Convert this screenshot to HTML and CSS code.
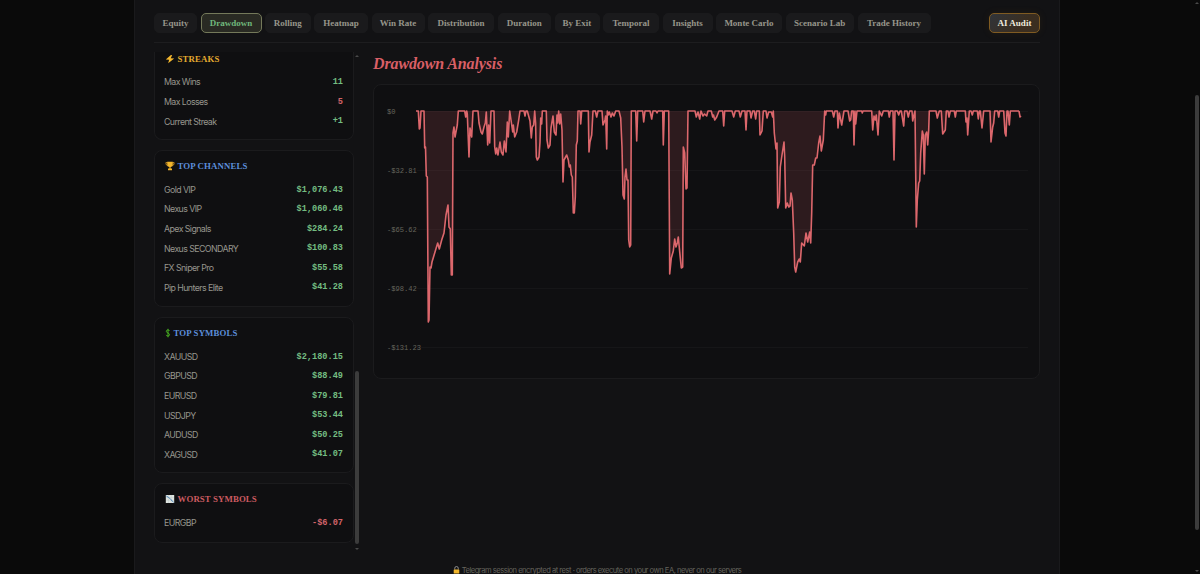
FILE: index.html
```html
<!DOCTYPE html>
<html lang="en">
<head>
<meta charset="utf-8">
<title>Drawdown Analysis</title>
<link rel="stylesheet" href="styles.css">
</head>
<body>
<main class="panel">
  <nav class="tabs">
    <button class="tab w-equity">Equity</button>
    <button class="tab w-drawdown active">Drawdown</button>
    <button class="tab w-rolling">Rolling</button>
    <button class="tab w-heatmap">Heatmap</button>
    <button class="tab w-winrate">Win Rate</button>
    <button class="tab w-distribution">Distribution</button>
    <button class="tab w-duration">Duration</button>
    <button class="tab w-exit">By Exit</button>
    <button class="tab w-temporal">Temporal</button>
    <button class="tab w-insights">Insights</button>
    <button class="tab w-monte">Monte Carlo</button>
    <button class="tab w-scenario">Scenario Lab</button>
    <button class="tab w-history">Trade History</button>
    <button class="tab audit">AI Audit</button>
  </nav>
  <div class="content">
    <aside class="sidebar">
      <section class="card first">
        <h3 class="gold"><svg class="icon" viewBox="0 0 10 10"><path d="M5.9.9.8 5.400l3.300.3L3.200 9.200l6-4.800-3.500-.2L7.200 1.200z" fill="#f5b82e"/></svg>STREAKS</h3>
        <div class="row"><span>Max Wins</span><b>11</b></div>
        <div class="row"><span>Max Losses</span><b class="neg">5</b></div>
        <div class="row"><span>Current Streak</span><b>+1</b></div>
      </section>
      <section class="card">
        <h3 class="blue"><svg class="icon" viewBox="0 0 10 10"><path d="M2.5 1.6H.9c0 2 .7 3 2.2 3.2M7.5 1.6h1.600c0 2-.7 3-2.200 3.200" fill="none" stroke="#d99a20" stroke-width=".9"/><path d="M2.2.7h5.600v2.500C7.800 4.800 6.800 5.800 5.600 6v1.500h1.400v1.700H3V7.500h1.400V6C3.200 5.800 2.200 4.800 2.200 3.200z" fill="#f2b52c"/></svg>TOP CHANNELS</h3>
        <div class="row"><span>Gold VIP</span><b>$1,076.43</b></div>
        <div class="row"><span>Nexus VIP</span><b>$1,060.46</b></div>
        <div class="row"><span>Apex Signals</span><b>$284.24</b></div>
        <div class="row"><span>Nexus SECONDARY</span><b>$100.83</b></div>
        <div class="row"><span>FX Sniper Pro</span><b>$55.58</b></div>
        <div class="row"><span>Pip Hunters Elite</span><b>$41.28</b></div>
      </section>
      <section class="card">
        <h3 class="blue"><svg class="icon dollar" viewBox="0 0 6 10"><path d="M4.500 3C4.300 1.500 1.300 1.500 1.300 3.300c0 1.900 3.300 1.500 3.300 3.500C4.600 8.400 1.400 8.500 1.200 6.900M3 .8v8.500" fill="none" stroke="#4bb822" stroke-width=".9"/></svg>TOP SYMBOLS</h3>
        <div class="row"><span>XAUUSD</span><b>$2,180.15</b></div>
        <div class="row"><span>GBPUSD</span><b>$88.49</b></div>
        <div class="row"><span>EURUSD</span><b>$79.81</b></div>
        <div class="row"><span>USDJPY</span><b>$53.44</b></div>
        <div class="row"><span>AUDUSD</span><b>$50.25</b></div>
        <div class="row"><span>XAGUSD</span><b>$41.07</b></div>
      </section>
      <section class="card">
        <h3 class="red"><svg class="icon" viewBox="0 0 10 10"><path d="M.8 1h8.400v8H.8z" fill="#dfe5e1"/><path d="M1 3.600h8M1 6.300h8M3.500 1v8M6.300 1v8" stroke="#b9c6c4" stroke-width=".4"/><path d="m1.300 2 2 1.300 1.500 1L6 5.800l2.700 2.500" fill="none" stroke="#3c78b4" stroke-width=".9"/></svg>WORST SYMBOLS</h3>
        <div class="row"><span>EURGBP</span><b class="neg">-$6.07</b></div>
      </section>
    </aside>
    <div class="side-scroll"><i class="arrow up"></i><i class="thumb"></i><i class="arrow down"></i></div>
    <section class="analysis">
      <h2>Drawdown Analysis</h2>
      <div class="chart-card">
        <svg class="chart" viewBox="374 85 665 293">
          <path class="grid" d="M417 111.500H1028M417 170.500H1028M417 229.500H1028M417 288.500H1028M417 347.500H1028"/>
          <g class="axis">
            <text x="387" y="114">$0</text>
            <text x="387" y="173">-$32.81</text>
            <text x="387" y="231.500">-$65.62</text>
            <text x="387" y="290.500">-$98.42</text>
            <text x="387" y="349.500">-$131.23</text>
          </g>
          <path class="series" d="M416 111H418.300L419.300 129 420 128 421 111H424L424.700 148 425.500 147 426.300 176 427.300 177 428.300 322 429 320 430 267 431 268 432 262 435 252 437.700 243 439.300 249 441.700 240 444 233 446 215 448 205 449 227 450.300 229 451.300 275H452.300L453 133 454 127 455 137 457.300 125 458.300 111H464.700L465.700 117 466.700 111 467.300 114 469 157 470 128 471.700 137 473 111H478L479 123 481 132 482.300 134 484 127 485.300 123 486.300 112 487.700 145 488.700 125 489.700 143 491 111H494L494.700 147 495.700 154 496.700 148 498 155 500 142 501.300 152 503 155 504.300 141 506 152 507.300 122 508.300 137 509.700 111 511.300 122 512.700 132 513.300 125 514.700 137 516.700 132 518.700 120 520 111H524L525 116 526 111H527.300L530 121 531.300 138 532.300 127 533.700 125 534.700 111 535.600 123 536.300 157 537.300 160 539 157 540 142 540.700 118 541.700 124 542.300 111H546.300L547 140 548.300 148 550 145 551 128 553 116 554.300 132 556 135 557 115 557.700 123 558.700 111 559.700 124 560.700 114 562 130 563 182 564 160 566.700 155 568.300 160 569.300 167 570.300 165 571.300 175 572.300 177 573.300 213H574.300L575.300 197 576.300 145 577.300 141 578 111H580L580.700 124 581.700 111H588.300L589 152 590 142 591.700 135 593 111H595.300L596.700 117 598 111H602L603 125 605 120 605.700 116 606.700 149 607.300 111 608.300 115 609.300 112 611 117 612.300 113 614 116 615.700 111H619L620.700 118 622 147 623 195 624.300 199 625 177 626 169 627 180H628L628.700 240 629.700 247 630.700 245 631.300 111H635.700L636.700 141 637.700 111H642.700L643.700 122 645 111H650L651.700 119 653 111H656L657 113 658 111H662.700L663.300 145 664.300 111H668.700L669.700 274 671.300 258 673.300 251 674.700 239 676 247 677.300 243 678.300 237 679.700 252 681.300 268 682.700 267 683.300 147 684.700 153 686 189 687 188 688 111H695L696.300 117 698 112 699.700 119 701 111 703 116 704.500 114 706.700 116 708 111H711.300L712.700 117 713.500 115 714.700 120 716.700 117 719 111H722.700L723.700 126 724.700 111H732L733.700 117 735.300 111H739L740.300 117 742 111H745L746 130 747 111H750L751 118 752.700 111H754.300L755.700 119 756.700 111H759.300L760 135 762 131 763.300 111H766L767 118 768.700 112H771.300L772.700 117 773.300 111 774.300 133 776 149 777 143 777.700 208 779.300 202 780.300 167 782 155 784 142 784.700 157 785.700 208 787.300 203 788.700 207 790 206 791 193 792.300 200 793.700 233 794.700 267 795.700 272 797.700 262 799.300 259 800.300 262 801.700 243 804.300 246 806 233 807.700 242 809.700 232 810.700 243 811.700 213 812.700 165H814.300L815.700 158H817L818.700 143 820 136 821.300 151 823.300 140 824.700 111 825.700 115 826.300 111H832.300L833.700 117 835 111H837.300L838 128 839.300 113 841.700 125 844 111H848L849.700 121 850.700 120 851.700 111H853.300L854 145 855 111 855.700 124 857 111H861.700L862.300 113 863 111H871.700L872.700 130 874 116 875.300 120 876.300 115 878 135 879.300 111 881.700 116 883.300 111H888.300L889.300 117 890.300 111H893L894 160 895 111H897.300L898.700 115 900 111H901.300L903.700 126 904.700 111H907L908.300 117 909.700 111H912L912.700 121 914 115 915 111 916.300 227 917.300 200 918.700 183 919.700 181 920.700 153 922.300 131 923.300 135 924.300 174 925.300 135 926.700 132 927.700 145 928.700 130 929.300 111H936L937.300 118 939.300 111H941.300L942.700 134 945.300 130 946.300 111H948L949 117 950.300 111H954.300L955.300 117 956.300 111H965.300L966 122 967 118 967.700 135 969.300 111H971L972.300 115 973.300 111H977.300L978.300 119 979.300 111H980.300L982 128 983.700 111H990L991 142 992.700 127 993.700 123 994.700 111H997.700L998.700 117 999.700 111H1003.700L1005 133 1006 136 1007 111H1008L1009.300 125 1010.300 111H1019M1019 111L1020 117 1021 116"/>
        </svg>
      </div>
    </section>
  </div>
  <footer><svg class="lock" viewBox="0 0 8 9"><path d="M2 4V2.500a2 2 0 0 1 4 0V4" fill="none" stroke="#a9a9a9" stroke-width=".9"/><rect x=".8" y="3.900" width="6.400" height="4.600" rx=".6" fill="#f0b52c"/></svg><span>Telegram session encrypted at rest · orders execute on your own EA, never on our servers</span></footer>
</main>
<div class="page-scroll"><i class="arrow up"></i><i class="thumb"></i><i class="arrow down"></i></div>
</body>
</html>
```

FILE: styles.css
```css
* { box-sizing: border-box; }
body {
  margin: 0;
  height: 574px;
  overflow: hidden;
  display: flex;
  background: #0a0a0a;
  font-family: Inter, "Liberation Sans", sans-serif;
}
.panel {
  width: 926px;
  height: 574px;
  margin-left: 134px;
  padding: 13px 19px 0;
  background: #121214;
  border: solid #1a1a1c;
  border-width: 0 1px;
  overflow: hidden;
}
.tabs {
  display: flex;
  gap: 3.5px;
  height: 30px;
  border-bottom: 1px solid #1d1d1f;
}
.tab {
  height: 20px;
  padding: 0;
  border: 1px solid #1a1a1c;
  border-radius: 5px;
  background: #1a1a1c;
  color: #96958a;
  font: bold 9px "Liberation Serif", serif;
  letter-spacing: 0;
  white-space: nowrap;
  flex: none;
}
.w-equity { width: 43px; }
.w-drawdown { width: 61px; }
.w-rolling { width: 45.500px; }
.w-heatmap { width: 54px; }
.w-winrate { width: 53px; }
.w-distribution { width: 66px; }
.w-duration { width: 53.500px; }
.w-exit { width: 45px; }
.w-temporal { width: 56px; }
.w-insights { width: 50px; }
.w-monte { width: 66px; }
.w-scenario { width: 68.500px; }
.w-history { width: 73px; }
.active {
  background: #292a23;
  border-color: #74795a;
  color: #70b77c;
}
.audit {
  width: 51px;
  margin-left: auto;
  background: linear-gradient(135deg, #30343a, #3b2e20 65%);
  border-color: #805b22;
  color: #eee9dc;
  box-shadow: 0 0 8px #a36b1918;
}
.content { display: flex; height: 511px; padding-top: 9px; }
.sidebar {
  width: 200px;
  height: 502px;
  overflow: hidden;
  display: flex;
  flex-direction: column;
  gap: 9.700px;
}
.card {
  flex: none;
  padding: 9.500px 10px 0 9px;
  border: 1px solid #1b1b1d;
  border-radius: 8px;
  background: #0f0f11;
}
.card.first {
  padding-top: 1px;
  border-top: 0;
  border-radius: 0 0 8px 8px;
  height: 88.300px;
}
.card:nth-child(2) { height: 157.300px; }
.card:nth-child(3) { height: 156.300px; }
.card:nth-child(4) { height: 59.700px; }
.card h3 {
  display: flex;
  align-items: center;
  height: 12px;
  margin: 0 0 7.200px 1px;
  font: bold 8.800px/12px "Liberation Serif", serif;
  letter-spacing: .12px;
}
.gold { color: #e3a92f; }
.blue { color: #5c8edb; }
.red { color: #cc5b61; }
.icon { width: 10px; height: 10px; margin-right: 2.500px; }
.icon.dollar { width: 6px; }
.row {
  display: flex;
  justify-content: space-between;
  align-items: center;
  height: 19.550px;
  color: #96958d;
  font-size: 8.800px;
  letter-spacing: -.58px;
}
.row b {
  padding-top: .5px;
  color: #74bd82;
  font: bold 8.600px "Liberation Mono", monospace;
  letter-spacing: 0;
}
.row .neg { color: #d2646a; }
.side-scroll, .page-scroll {
  display: flex;
  flex-direction: column;
  width: 6px;
}
.side-scroll { height: 498px; padding-top: 3px; }
.page-scroll { height: 574px; padding: 2px 0; margin-left: 134px; }
.thumb { width: 4px; margin: 0 1px; border-radius: 2px; background: #3c3c3c; }
.side-scroll .thumb { height: 173px; margin-top: 314px; }
.page-scroll .thumb { height: 435px; margin-top: 91px; }
.arrow { width: 4px; height: 2px; margin: 0 1px; background: #4a4a4a; }
.up { clip-path: polygon(50% 0, 100% 100%, 0 100%); }
.down { margin-top: auto; clip-path: polygon(0 0, 100% 0, 50% 100%); }
.analysis { width: 667px; margin-left: 13px; }
.analysis h2 {
  height: 32px;
  margin: 0;
  color: #d85f66;
  font: italic bold 16px/24px "Liberation Serif", serif;
  letter-spacing: -.13px;
}
.chart-card {
  height: 295px;
  border: 1px solid #1b1b1d;
  border-radius: 8px;
  background: #0f0f11;
}
.chart { display: block; width: 665px; height: 293px; }
.grid { fill: none; stroke: #161618; stroke-width: 1; }
.series {
  fill: #e0686d;
  fill-opacity: .15;
  stroke: #dc676c;
  stroke-width: 1.600;
  stroke-linejoin: round;
}
.axis { fill: #65645c; font: 7.100px "Liberation Mono", monospace; }
footer {
  display: flex;
  justify-content: center;
  align-items: center;
  gap: 2px;
  height: 12px;
  margin-top: 10px;
  color: #65645d;
  font-size: 7.600px;
  letter-spacing: -.5px;
}
.lock { width: 7px; height: 8px; }
```
